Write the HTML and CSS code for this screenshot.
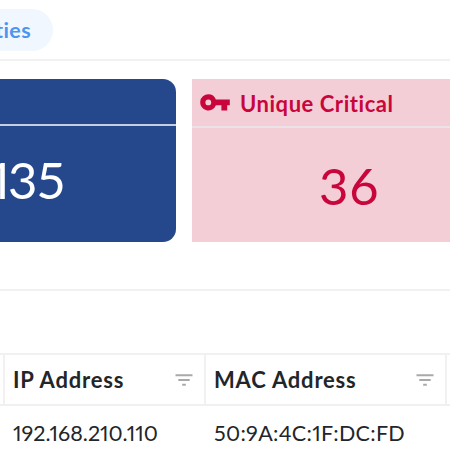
FILE: index.html
```
<!DOCTYPE html>
<html lang="en">
<head>
    <meta charset="UTF-8">
    <meta name="viewport" content="width=device-width, initial-scale=1.0">
    <title>Vulnerabilities</title>
    <link rel="stylesheet" href="styles.css">
</head>
<body>
    <div class="tabs">
        <a class="tab"><span>ties</span></a>
    </div>
    <div class="cards">
        <div class="card total">
            <div class="card-title"></div>
            <div class="card-value"><span><span class="one">1</span>35</span></div>
        </div>
        <div class="card critical">
            <div class="card-title">
                <svg class="key" viewBox="0 0 30 17" width="30" height="17">
                    <path fill-rule="evenodd" d="M8.3 0.3a8.1 8.1 0 1 0 7.6 10.9h5.5v5.2h5.8v-5.2h2.6V5.5H15.9A8.1 8.1 0 0 0 8.3.3zM8.3 5.5a2.9 2.9 0 1 1 0 5.8a2.9 2.9 0 0 1 0-5.8z"/>
                </svg>
                <span>Unique Critical</span>
            </div>
            <div class="card-value"><span>36</span></div>
        </div>
    </div>
    <div class="grid">
        <div class="row head">
            <div class="cell edge"></div>
            <div class="cell ip">
                <span>IP Address</span>
                <svg class="filter" viewBox="0 0 18 12" width="18" height="12">
                    <path d="M.5 1.3h17M3.3 6h11.4M7.2 10.8h3.6"/>
                </svg>
            </div>
            <div class="cell mac">
                <span>MAC Address</span>
                <svg class="filter" viewBox="0 0 18 12" width="18" height="12">
                    <path d="M.5 1.3h17M3.3 6h11.4M7.2 10.8h3.6"/>
                </svg>
            </div>
            <div class="cell"></div>
        </div>
        <div class="row">
            <div class="cell edge"></div>
            <div class="cell ip"><span>192.168.210.110</span></div>
            <div class="cell mac"><span>50:9A:4C:1F:DC:FD</span></div>
            <div class="cell"></div>
        </div>
    </div>
</body>
</html>
```
FILE: styles.css
```
* {
    box-sizing: border-box;
}
body {
    margin: 0;
    height: 450px;
    overflow: hidden;
    background-color: #fff;
    font-family: Lato, sans-serif;
    font-size: 21.5px;
    font-variant-ligatures: none;
    font-variant-numeric: proportional-nums;
    color: #22262b;
}
.tabs {
    height: 61px;
    padding-top: 9px;
    border-bottom: 2px solid #f1f1f1;
}
.tab {
    display: flex;
    align-items: center;
    justify-content: flex-end;
    width: 53px;
    height: 42px;
    padding-right: 22px;
    border-radius: 0 21px 21px 0;
    background-color: #f1f7ff;
    color: #4e95ee;
    font-weight: bold;
    letter-spacing: 0.4px;
}
.cards {
    display: flex;
    gap: 16px;
    height: 230px;
    padding-top: 18px;
    border-bottom: 2px solid #f1f1f2;
}
.card {
    height: 163px;
}
.card-title {
    display: flex;
    align-items: center;
    font-size: 22px;
    font-weight: bold;
    letter-spacing: 0.55px;
}
.card-title span {
    padding-top: 2px;
}
.card-value {
    display: flex;
    align-items: center;
    padding-bottom: 5px;
    font-size: 51px;
}
.total {
    width: 176px;
    border-radius: 0 13px 13px 0;
    background-color: #25478c;
    color: #fff;
}
.total .card-title {
    height: 47px;
    border-bottom: 2px solid #c6cfe1;
}
.total .card-value {
    justify-content: flex-end;
    height: 111px;
    padding-right: 111px;
}
.one {
    letter-spacing: -2px;
}
.critical {
    width: 258px;
    background-color: #f3ced6;
    color: #c8063b;
}
.critical .card-title {
    height: 49px;
    padding-left: 8px;
    gap: 10px;
    border-bottom: 2px solid #ebe3e8;
}
.critical .card-value {
    height: 120px;
    padding-left: 127px;
    padding-bottom: 6px;
    letter-spacing: 1px;
}
.key {
    fill: #c8063b;
}
.grid {
    margin-top: 62px;
    border-top: 2px solid #f1f1f2;
}
.row {
    display: grid;
    grid-template-columns: 3px 201px 241px 5px;
    height: 53px;
}
.head {
    height: 51px;
    border-bottom: 2px solid #f0f0f1;
    font-size: 22px;
    font-weight: bold;
    letter-spacing: 0.8px;
}
.cell {
    display: flex;
    align-items: center;
    justify-content: space-between;
    padding-left: 10px;
    padding-right: 11px;
    white-space: nowrap;
}
.edge {
    padding: 0;
}
.head .cell:not(.edge) {
    border-left: 2px solid #f1f1f2;
    padding-left: 8px;
}
.row .cell:last-child {
    padding: 0;
}
.row:not(.head) .mac {
    letter-spacing: 0.3px;
}
.filter {
    fill: none;
    stroke: #a7a9ac;
    stroke-width: 2;
}
```
